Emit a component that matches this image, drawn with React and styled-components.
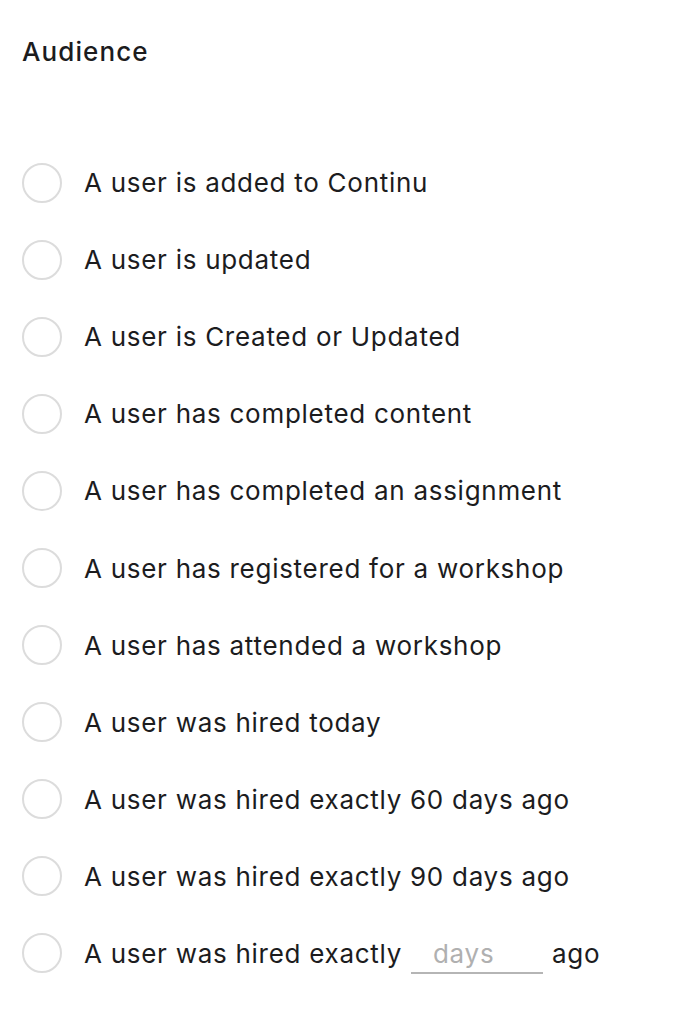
import React from "react";
import styled, { createGlobalStyle } from "styled-components";

const Global = createGlobalStyle`
  html, body { margin: 0; padding: 0; background: #fff; }
  body { font-family: Inter, "Noto Sans", sans-serif; color: #1c1c1e; }
`;

const Page = styled.div`
  padding: 36px 22px 0 22px;
`;

const Heading = styled.h2`
  margin: 0;
  font-size: 26px;
  line-height: 32px;
  font-weight: 500;
  letter-spacing: 1.1px;
  color: #1c1c1e;
`;

const List = styled.div`
  margin-top: 76px;
  display: flex;
  flex-direction: column;
`;

const Row = styled.label`
  display: flex;
  align-items: center;
  height: 77.1px;
  font-size: 26px;
  font-weight: 400;
  letter-spacing: 0.72px;
  color: #1c1c1e;
  cursor: pointer;
`;

const Radio = styled.span`
  box-sizing: border-box;
  width: 40px;
  height: 40px;
  border-radius: 50%;
  border: 2px solid #dcdcdc;
  flex: none;
  margin-right: 22px;
`;

const DaysInput = styled.input`
  box-sizing: border-box;
  width: 132px;
  height: 42px;
  margin: 0 9px;
  border: none;
  border-bottom: 2px solid #b5b5b5;
  padding: 5px 0 3px 22px;
  font: inherit;
  font-size: 26px;
  line-height: 32px;
  letter-spacing: 0.72px;
  color: #1c1c1e;
  background: transparent;
  outline: none;
  &::placeholder { color: #b0b0b0; }
`;

const items = [
  "A user is added to Continu",
  "A user is updated",
  "A user is Created or Updated",
  "A user has completed content",
  "A user has completed an assignment",
  "A user has registered for a workshop",
  "A user has attended a workshop",
  "A user was hired today",
  "A user was hired exactly 60 days ago",
  "A user was hired exactly 90 days ago",
];

export default function App() {
  return (
    <Page>
      <Global />
      <Heading>Audience</Heading>
      <List>
        {items.map((t) => (
          <Row key={t}>
            <Radio />
            {t}
          </Row>
        ))}
        <Row>
          <Radio />
          A user was hired exactly
          <DaysInput placeholder="days" />
          ago
        </Row>
      </List>
    </Page>
  );
}
